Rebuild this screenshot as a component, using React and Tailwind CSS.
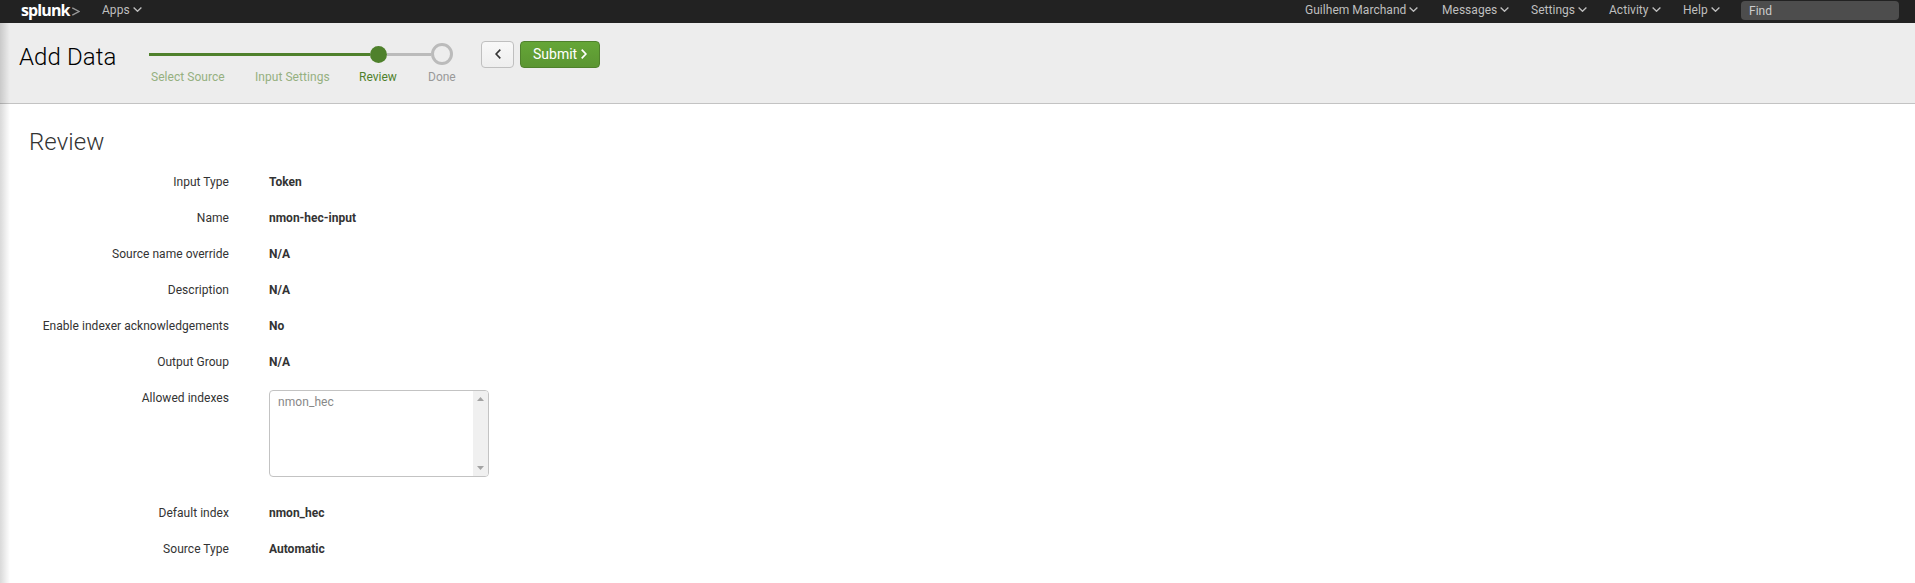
const menus = [
  { label: "Guilhem Marchand", width: "w-[137px]" },
  { label: "Messages", width: "w-[89px]" },
  { label: "Settings", width: "w-[78px]" },
  { label: "Activity", width: "w-[74px]" },
  { label: "Help", width: "w-[58px]" },
];

const summary = [
  ["Input Type", "Token"],
  ["Name", "nmon-hec-input"],
  ["Source name override", "N/A"],
  ["Description", "N/A"],
  ["Enable indexer acknowledgements", "No"],
  ["Output Group", "N/A"],
];

function Caret() {
  return (
    <svg className="h-[5px] w-[9px]" viewBox="0 0 9 5" fill="none" stroke="currentColor" strokeWidth="1.3">
      <path d="M0.6 0.5 4.5 4.3 8.4 0.5" />
    </svg>
  );
}

function MenuItem({ label, width }) {
  return (
    <div className={"flex h-[19px] items-center gap-[3px] whitespace-nowrap " + width}>
      <span className="tracking-[0.03px]">{label}</span>
      <Caret />
    </div>
  );
}

function TopBar() {
  return (
    <nav className="flex h-[23px] items-start bg-[#222] text-xs text-[#bfbfbf]">
      <div className="ml-[21px] flex h-5 w-[81px] items-center font-['Open_Sans',sans-serif] text-[16px] leading-5">
        <span className="font-bold tracking-[-0.9px] text-white">splunk</span>
        <svg className="mt-[3px] ml-[2px] h-[9px] w-2" viewBox="0 0 8 9" fill="none" stroke="#999" strokeWidth="1.3">
          <path d="M0.3 0.8 7 4.5 0.3 8.2" />
        </svg>
      </div>
      <MenuItem label="Apps" width="w-20" />
      <div className="ml-auto flex">
        {menus.map((m) => (
          <MenuItem key={m.label} label={m.label} width={m.width} />
        ))}
        <div className="mt-px mr-4 flex h-[19px] w-[158px] items-center rounded-[4px] bg-[#4d4d4d] pl-2 text-[#ccc]">
          Find
        </div>
      </div>
    </nav>
  );
}

function Stepper() {
  return (
    <div className="mt-5 ml-[149px] w-[304px] shrink-0">
      <div className="flex h-[22px] items-center">
        <div className="h-[3px] w-[221px] bg-[#4f812c]" />
        <div className="size-[17px] rounded-full bg-[#4f812c]" />
        <div className="h-[3px] w-11 bg-[#bbb]" />
        <div className="size-[22px] rounded-full border-[3px] border-[#bbb]" />
      </div>
      <div className="mt-1 flex pl-[2px] text-xs leading-4 whitespace-nowrap text-[#95b080]">
        <span className="w-[104px] shrink-0 tracking-[0.04px]">Select Source</span>
        <span className="w-[104px] shrink-0 tracking-[0.05px]">Input Settings</span>
        <span className="w-[69px] shrink-0 text-[#4f812c]">Review</span>
        <span className="shrink-0 text-[#999]">Done</span>
      </div>
    </div>
  );
}

function Header() {
  return (
    <header className="flex h-[81px] border-b border-[#c3c3c3] bg-[#ededed]">
      <h1 className="mt-5 ml-[19px] w-0 text-2xl leading-7 font-light tracking-[0.1px] whitespace-nowrap text-black">Add Data</h1>
      <div className="-ml-[19px] flex">
        <Stepper />
        <div className="mt-[18px] ml-[28px] flex gap-[6px]">
          <button className="flex h-[27px] w-[33px] items-center justify-center rounded-[4px] border border-[#bfbfbf] bg-gradient-to-b from-[#f8f8f8] to-[#eee] pb-px text-[#333]">
            <svg className="h-[10px] w-[6px]" viewBox="0 0 6 10" fill="none" stroke="currentColor" strokeWidth="1.6">
              <path d="M5.3 0.6 1.1 5 5.3 9.4" />
            </svg>
          </button>
          <button className="flex h-[27px] w-20 items-center rounded-[4px] border border-[#4f812c] bg-gradient-to-b from-[#65a637] to-[#5b9632] pb-px pl-3 text-sm text-white">
            <span>Submit</span>
            <svg className="ml-1 h-[10px] w-[6px]" viewBox="0 0 6 10" fill="none" stroke="currentColor" strokeWidth="1.7">
              <path d="M0.7 0.6 4.9 5 0.7 9.4" />
            </svg>
          </button>
        </div>
      </div>
    </header>
  );
}

function Row({ label, children, height = "h-9" }) {
  return (
    <div className={"flex text-xs leading-4 " + height}>
      <dt className="w-[229px] shrink-0 text-right tracking-[0.04px]">{label}</dt>
      <dd className="ml-10 font-bold">{children}</dd>
    </div>
  );
}

function IndexList() {
  return (
    <div className="flex h-[87px] w-[220px] overflow-hidden rounded-[4px] border border-[#c3c3c3] bg-white font-normal text-[#888]">
      <div className="flex-1 pt-[3px] pl-2 tracking-[0.08px]">nmon_hec</div>
      <div className="flex w-[15px] flex-col items-center justify-between bg-[#f0f0f0] py-[6px] text-[#a3a3a3]">
        <svg className="h-1 w-[7px]" viewBox="0 0 7 4" fill="currentColor">
          <path d="M0 4 3.5 0 7 4Z" />
        </svg>
        <svg className="h-1 w-[7px]" viewBox="0 0 7 4" fill="currentColor">
          <path d="M0 0 3.5 4 7 0Z" />
        </svg>
      </div>
    </div>
  );
}

export default function App() {
  return (
    <div className="relative h-[583px] overflow-hidden bg-white font-['Roboto',sans-serif] text-[#333]">
      <TopBar />
      <Header />
      <main>
        <h2 className="pt-6 pl-[29px] text-2xl leading-7 font-light tracking-[0.1px]">Review</h2>
        <dl className="mt-[18px]">
          {summary.map(([label, value]) => (
            <Row key={label} label={label}>{value}</Row>
          ))}
          <Row label="Allowed indexes" height="h-[115px]">
            <IndexList />
          </Row>
          <Row label="Default index">nmon_hec</Row>
          <Row label="Source Type">Automatic</Row>
        </dl>
      </main>
      <div className="pointer-events-none absolute top-[23px] bottom-0 left-0 w-[10px] bg-gradient-to-r from-black/15 to-transparent" />
    </div>
  );
}
